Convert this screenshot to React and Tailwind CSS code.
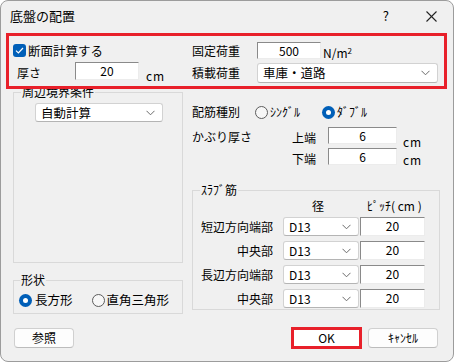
import React from "react";

const Radio = ({ checked, className = "" }) =>
  checked ? (
    <span className={"w-[13px] h-[13px] rounded-full bg-[#005fb8] flex items-center justify-center shrink-0 " + className}>
      <span className="w-[5px] h-[5px] rounded-full bg-white" />
    </span>
  ) : (
    <span className={"block w-[13px] h-[13px] rounded-full border border-[#5c5c5c] bg-[#f7f7f7] shrink-0 " + className} />
  );

const Chevron = () => (
  <svg width="9" height="6" viewBox="0 0 9 6" className="shrink-0">
    <polyline points="0.5,0.8 4.5,4.8 8.5,0.8" fill="none" stroke="#6b6b6b" strokeWidth="1" />
  </svg>
);

function Field({ value, className }) {
  return (
    <div
      className={
        "bg-white border border-t-[#8a8a8a] border-l-[#8a8a8a] border-r-[#ececec] border-b-[#ececec] text-center text-[12px] leading-[14px] pt-[1px] " +
        className
      }
    >
      {value}
    </div>
  );
}

function Combo({ value, className, textClass = "text-[12px]" }) {
  return (
    <div
      className={
        "bg-white border border-[#d2d2d2] border-b-[#b4b4b4] rounded-[3px] flex items-center justify-between pl-[5px] pr-[7px] " +
        className
      }
    >
      <span className={textClass + " leading-[16px]"}>{value}</span>
      <Chevron />
    </div>
  );
}

function Button({ children, className }) {
  return (
    <div
      className={
        "bg-[#fdfdfd] border border-[#d0d0d0] border-b-[#bcbcbc] rounded-[4px] flex items-center justify-center text-[12px] leading-[14px] " +
        className
      }
    >
      {children}
    </div>
  );
}

export default function App() {
  const slabRows = ["短辺方向端部", "中央部", "長辺方向端部", "中央部"];
  return (
    <div className="relative w-[454px] h-[362px] bg-[#f0f0f0] border border-[#9c9c9c] rounded-[8px] overflow-hidden text-black font-['Noto_Sans_CJK_JP',sans-serif] leading-[16px]">
      {/* title bar */}
      <div className="h-[30px] flex items-center pl-[9px] pr-[16px]">
        <span className="text-[13px] leading-[16px]">底盤の配置</span>
        <span className="ml-auto text-[13px] leading-[16px]">?</span>
        <svg width="11" height="11" viewBox="0 0 11 11" className="ml-[37px]">
          <line x1="0.5" y1="0.5" x2="10.5" y2="10.5" stroke="#222" strokeWidth="1.1" />
          <line x1="10.5" y1="0.5" x2="0.5" y2="10.5" stroke="#222" strokeWidth="1.1" />
        </svg>
      </div>

      {/* top section */}
      <div className="h-[54px] pt-[11px] flex flex-col gap-[4px] text-[12px]">
        <div className="h-[17px] flex items-center pl-[12px]">
          <div className="w-[179px] flex items-center">
            <span className="w-[13px] h-[13px] rounded-[3px] bg-[#005fb8] flex items-center justify-center">
              <svg width="9" height="7" viewBox="0 0 9 7">
                <polyline points="1,3.6 3.4,6 8,1" fill="none" stroke="white" strokeWidth="1.2" />
              </svg>
            </span>
            <span className="ml-[2px] text-[12.5px]">断面計算する</span>
          </div>
          <span className="w-[65px]">固定荷重</span>
          <Field value="500" className="w-[64px] h-[17px]" />
          <span className="ml-[2px] mt-[4px]">
            N/m<sup className="text-[8px]">2</sup>
          </span>
        </div>
        <div className="h-[20px] flex items-center pl-[12px]">
          <div className="w-[179px] flex items-center">
            <span className="ml-[4px] w-[58px]">厚さ</span>
            <Field value="20" className="w-[64px] h-[18px] self-start" />
            <span className="ml-[7px] mt-[6px] tracking-[1px]">cm</span>
          </div>
          <span className="w-[65px]">積載荷重</span>
          <Combo value="車庫・道路" className="w-[181px] h-[20px]" textClass="text-[12.5px]" />
        </div>
      </div>

      {/* body */}
      <div className="flex pl-[12px] text-[12px]">
        <div className="w-[170px] flex flex-col">
          <fieldset className="h-[178px] border border-[#d9d9d9] px-0">
            <legend className="ml-[7px] px-[1px] leading-[14px]">周辺境界条件</legend>
            <Combo value="自動計算" className="ml-[21px] mt-[4px] w-[128px] h-[19px]" textClass="text-[12.5px]" />
          </fieldset>
          <fieldset className="mt-[10px] h-[41px] border border-[#d9d9d9]">
            <legend className="ml-[6px] px-[1px] leading-[14px]">形状</legend>
            <div className="mt-[3px] h-[20px] flex items-center pl-[5px] text-[12.5px]">
              <Radio checked />
              <span className="ml-[3px]">長方形</span>
              <Radio className="ml-[19px]" />
              <span className="ml-[2px]">直角三角形</span>
            </div>
          </fieldset>
        </div>

        <div className="ml-[9px] w-[248px] flex flex-col">
          <div className="mt-[19px] h-[16px] flex items-center whitespace-nowrap">
            <span className="w-[63px]">配筋種別</span>
            <Radio />
            <span className="ml-[2px] w-[52px]">ｼﾝｸﾞﾙ</span>
            <Radio checked />
            <span className="ml-[2px]">ﾀﾞﾌﾞﾙ</span>
          </div>
          <div className="mt-[7px] h-[17px] flex items-start">
            <span className="w-[100px] leading-[17px] pt-[1px]">かぶり厚さ</span>
            <span className="w-[36px] leading-[17px] pt-[2px]">上端</span>
            <Field value="6" className="w-[69px] h-[17px]" />
            <span className="ml-[6px] pt-[6px] leading-[17px] tracking-[1px]">cm</span>
          </div>
          <div className="mt-[4px] h-[17px] flex items-start">
            <span className="w-[100px]" />
            <span className="w-[36px] leading-[17px] pt-[2px]">下端</span>
            <Field value="6" className="w-[69px] h-[17px]" />
            <span className="ml-[6px] pt-[3px] leading-[17px] tracking-[1px]">cm</span>
          </div>
          <fieldset className="mt-[18px] h-[127px] border border-[#d9d9d9]">
            <legend className="ml-[7px] px-[1px] leading-[14px]">ｽﾗﾌﾞ筋</legend>
            <div className="h-[18px] flex items-center whitespace-nowrap">
              <span className="ml-[119px] w-[14px]">径</span>
              <span className="ml-[41px]">ﾋﾟｯﾁ( cm )</span>
            </div>
            <div className="mt-[2px] flex flex-col gap-[5px]">
              {slabRows.map((label, i) => (
                <div key={i} className="h-[19px] flex items-center">
                  <span className="w-[80px] text-right">{label}</span>
                  <Combo value="D13" className="ml-[10px] w-[76px] h-[19px]" />
                  <Field value="20" className="ml-[1px] w-[65px] h-[19px]" />
                </div>
              ))}
            </div>
          </fieldset>
        </div>
      </div>

      {/* footer */}
      <div className="mt-[13px] flex items-center pl-[13px] pr-[15px] text-[12px]">
        <Button className="w-[60px] h-[20px]">参照</Button>
        <div className="ml-auto w-[71px] h-[22px] border-[3px] border-[#e8202a] bg-white flex items-center justify-center leading-[14px]">
          OK
        </div>
        <Button className="ml-[6px] w-[70px] h-[20px]">ｷｬﾝｾﾙ</Button>
      </div>

      {/* red annotation */}
      <div className="absolute left-[5px] top-[32px] w-[441px] h-[56px] border-[3px] border-[#e8202a] pointer-events-none" />
    </div>
  );
}
